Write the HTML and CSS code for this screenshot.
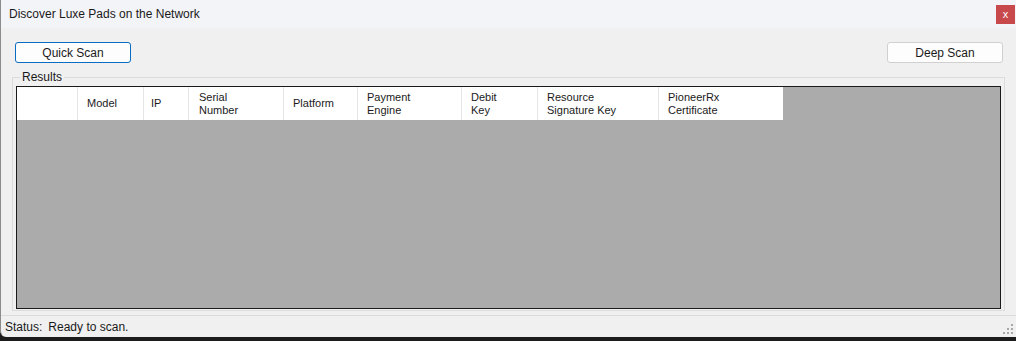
FILE: index.html
```html
<!DOCTYPE html>
<html lang="en">
  <head>
    <meta charset="UTF-8" />
    <title>Discover Luxe Pads on the Network</title>
    <link rel="stylesheet" href="styles.css">
  </head>
  <body>
    <div class="window">
      <div class="titlebar">
        <span class="title">Discover Luxe Pads on the Network</span>
        <button class="close">x</button>
      </div>

      <div class="toolbar">
        <button class="btn btn-default">Quick Scan</button>
        <button class="btn">Deep Scan</button>
      </div>

      <fieldset class="results">
        <legend>Results</legend>
        <div class="grid">
          <div class="grid-header">
            <div class="col col-blank"></div>
            <div class="col col-model">Model</div>
            <div class="col col-ip">IP</div>
            <div class="col col-serial">Serial<br>Number</div>
            <div class="col col-platform">Platform</div>
            <div class="col col-engine">Payment<br>Engine</div>
            <div class="col col-debit">Debit<br>Key</div>
            <div class="col col-resource">Resource<br>Signature Key</div>
            <div class="col col-cert">PioneerRx<br>Certificate</div>
          </div>
        </div>
      </fieldset>

      <div class="statusbar">
        <span class="status-label">Status:</span>
        <span class="status-text">Ready to scan.</span>
        <svg class="grip" width="11" height="11" viewBox="0 0 11 11">
          <rect x="8" y="0" width="2" height="2" />
          <rect x="4" y="4" width="2" height="2" />
          <rect x="8" y="4" width="2" height="2" />
          <rect x="0" y="8" width="2" height="2" />
          <rect x="4" y="8" width="2" height="2" />
          <rect x="8" y="8" width="2" height="2" />
        </svg>
      </div>
    </div>
  </body>
</html>
```

FILE: styles.css
```css
* {
  margin: 0;
  padding: 0;
  box-sizing: border-box;
  font-family: "Liberation Sans", Arial, sans-serif;
}

body {
  background-color: #1c1c1c;
  color: #000;
  width: 1016px;
  height: 341px;
  overflow: hidden;
}

.window {
  height: 337px;
  background-color: #f0f0f0;
  border-left: 1px solid #8c8c8c;
  border-bottom-left-radius: 6px;
  display: flex;
  flex-direction: column;
}

.titlebar {
  height: 28px;
  background-color: #f3f4f8;
  display: flex;
  align-items: center;
  padding-left: 8px;
}

.title {
  font-size: 12px;
  color: #1a1a1a;
}

.close {
  margin-left: auto;
  margin-right: 1px;
  width: 19px;
  height: 19px;
  background-color: #c8494b;
  color: #fff;
  border: none;
  font-size: 11px;
  line-height: 17px;
}

.toolbar {
  display: flex;
  justify-content: space-between;
  padding: 14px 13px 0 14px;
}

.btn {
  width: 116px;
  height: 21px;
  background-color: #fdfdfd;
  border: 1px solid #d0d0d0;
  border-radius: 3px;
  font-size: 12px;
  color: #1a1a1a;
}

.btn-default {
  border-color: #0a6cc2;
}

.results {
  margin: 7px 11px 0 11px;
  padding: 0 3px 1px 3px;
  border: 1px solid #dcdcdc;
}

.results legend {
  margin-left: 4px;
  padding: 0 2px;
  font-size: 12px;
  line-height: 14px;
  color: #1a1a1a;
}

.grid {
  margin-top: 2px;
  height: 223px;
  background-color: #ababab;
  border: 1px solid #1a1a1a;
}

.grid-header {
  display: flex;
  height: 33px;
  width: 766px;
  background-color: #fff;
}

.col {
  height: 100%;
  border-right: 1px solid #e5e5e5;
  padding-left: 9px;
  font-size: 11px;
  line-height: 13px;
  color: #1a1a1a;
  display: flex;
  align-items: center;
}

.col-blank { width: 61px; }
.col-model { width: 66px; }
.col-ip { width: 45px; padding-left: 7px; }
.col-serial { width: 95px; padding-left: 10px; }
.col-platform { width: 74px; }
.col-engine { width: 104px; }
.col-debit { width: 76px; }
.col-resource { width: 121px; }
.col-cert { width: 124px; border-right: none; }

.statusbar {
  margin-top: 4px;
  flex: 1;
  border-top: 1px solid #dadada;
  display: flex;
  align-items: center;
  padding-left: 4px;
  font-size: 12px;
  color: #1a1a1a;
}

.status-label {
  margin-right: 6px;
}

.grip {
  margin-left: auto;
  margin-right: 2px;
  align-self: flex-end;
  margin-bottom: 2px;
  fill: #a8a8a8;
}
```
